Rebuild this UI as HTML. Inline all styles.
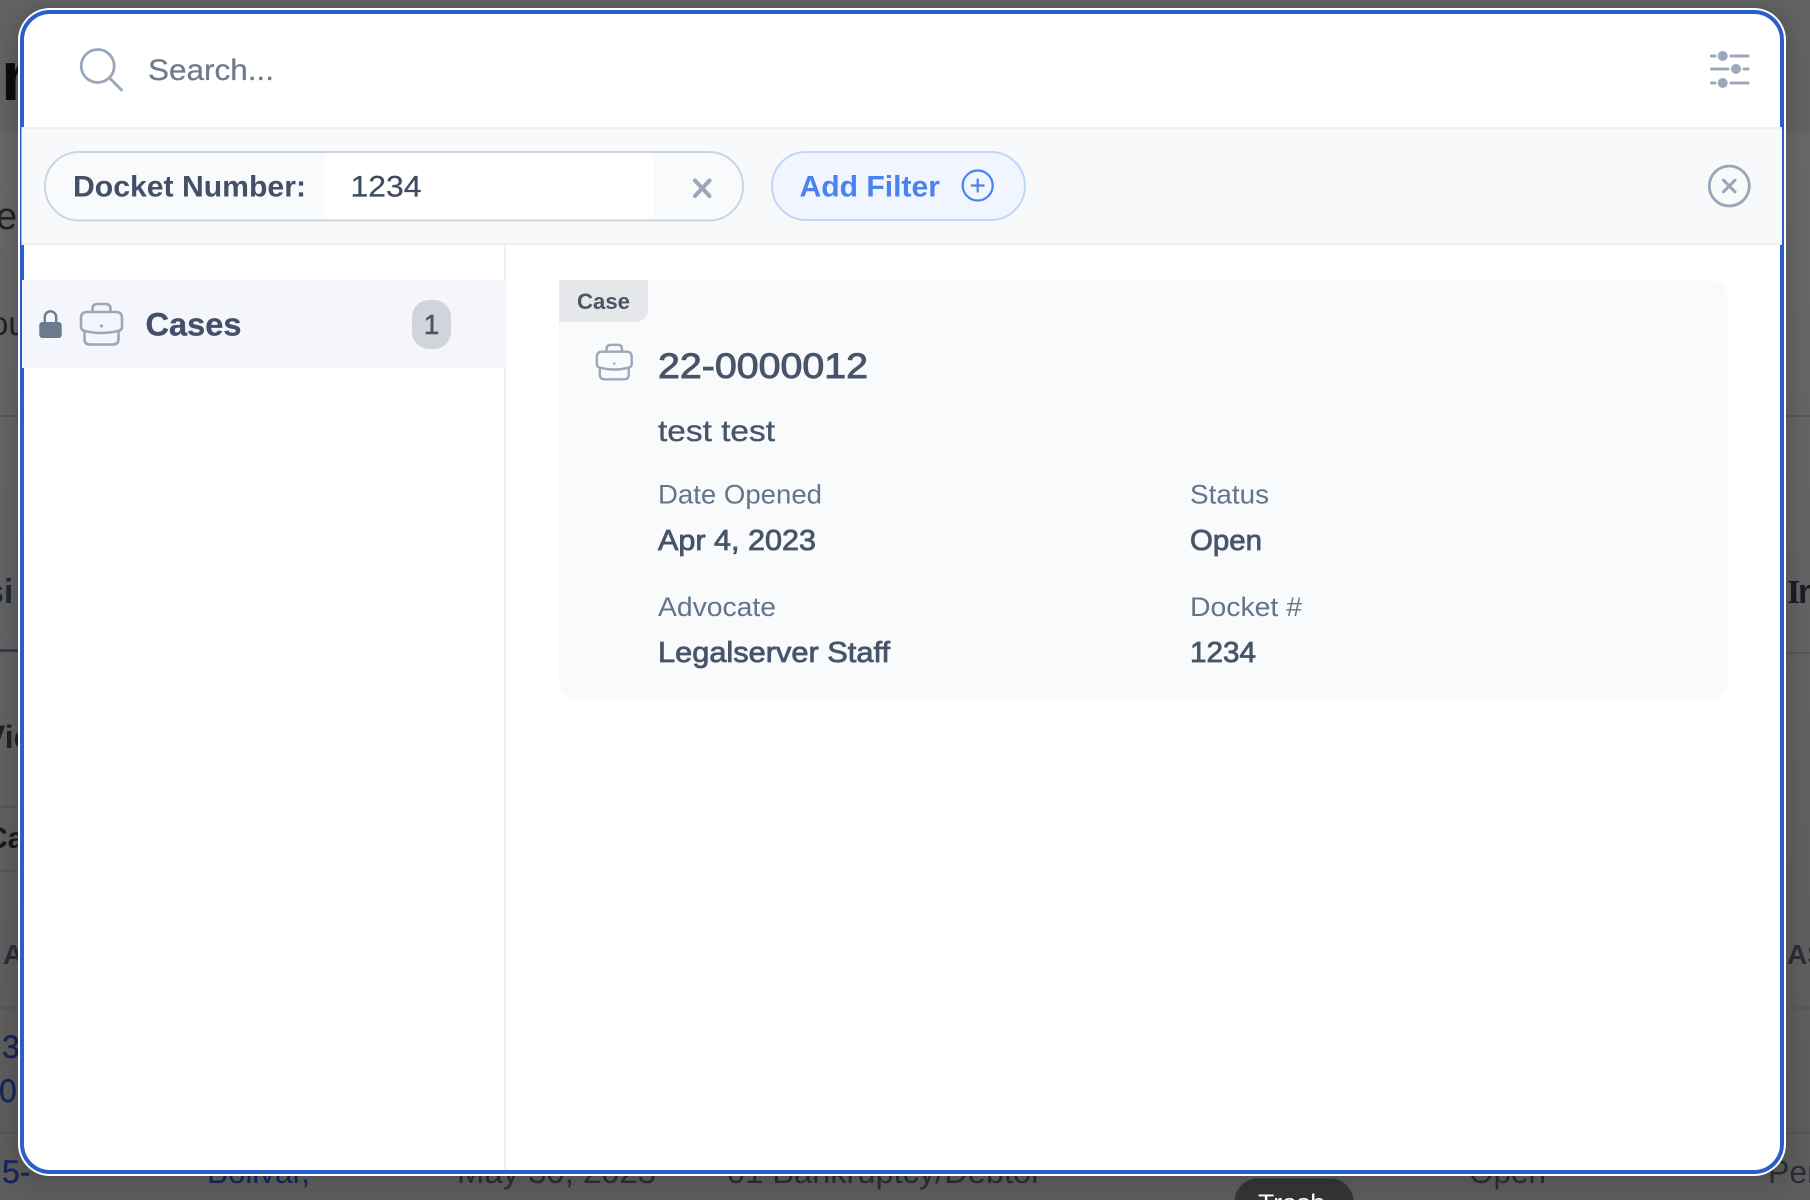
<!DOCTYPE html>
<html lang="en">
<head>
<meta charset="utf-8">
<title>Search</title>
<style>
html,body{margin:0;padding:0;width:1810px;height:1200px;overflow:hidden;background:#666}
svg{display:block}
text{font-family:"Liberation Sans",sans-serif}
</style>
</head>
<body>
<svg xmlns="http://www.w3.org/2000/svg" width="1810" height="1200" viewBox="0 0 1810 1200">
<defs>
<filter id="sh" x="-5%" y="-5%" width="110%" height="110%"><feGaussianBlur stdDeviation="12"/></filter>
<linearGradient id="bgb" x1="0" y1="0" x2="0" y2="1"><stop offset="0" stop-color="#6a6a6a"/><stop offset="1" stop-color="#5c5c5c"/></linearGradient>
</defs>
<!-- backdrop -->
<rect x="0" y="0" width="1810" height="1200" fill="url(#bgb)"/>
<rect x="0" y="0" width="1810" height="133" fill="#626364"/>
<!-- backdrop lines -->
<g fill="#565759">
<rect x="0" y="415" width="18" height="2"/><rect x="1786" y="415" width="24" height="2"/>
<rect x="0" y="806" width="18" height="2"/><rect x="0" y="870" width="18" height="2"/>
<rect x="0" y="1007" width="18" height="2"/><rect x="1786" y="1007" width="24" height="2"/>
<rect x="0" y="1132" width="18" height="2"/><rect x="1786" y="1132" width="24" height="2"/>
<rect x="1786" y="652" width="24" height="2"/>
</g>
<rect x="0" y="649" width="18" height="3" fill="#333d57"/>
<!-- backdrop text -->
<text x="1" y="100" font-size="70" font-weight="700" fill="#0c0c0f">r</text>
<text x="-4" y="229" font-size="38" fill="#202226">e</text>
<text x="-10" y="335" font-size="33" fill="#202226">ou</text>
<text x="-15" y="603" font-size="34" font-weight="700" fill="#22283a">si</text>
<text x="-16" y="748" font-size="32" font-weight="700" fill="#1f2126">Vie</text>
<text x="-14" y="848" font-size="30" font-weight="700" fill="#18191d">Ca</text>
<text x="3" y="964" font-size="28" font-weight="700" fill="#2b2e36">A</text>
<text x="2" y="1058" font-size="32" fill="#18245c" stroke="#18245c" stroke-width=".4">3</text>
<text x="-1" y="1102" font-size="32" fill="#18245c" stroke="#18245c" stroke-width=".4">0</text>
<text x="2" y="1183" font-size="32" fill="#18245c" stroke="#18245c" stroke-width=".4">5-</text>
<text x="207" y="1183" font-size="32" fill="#18245c" textLength="103" lengthAdjust="spacingAndGlyphs">Bolivar,</text>
<text x="457" y="1183" font-size="32" fill="#2a2d34" textLength="199" lengthAdjust="spacingAndGlyphs">May 30, 2023</text>
<text x="727" y="1183" font-size="32" fill="#2a2d34" textLength="315" lengthAdjust="spacingAndGlyphs">01 Bankruptcy/Debtor</text>
<text x="1469" y="1183" font-size="32" fill="#2a2d34" textLength="77" lengthAdjust="spacingAndGlyphs">Open</text>
<text x="1768" y="1183" font-size="32" fill="#2a2d34">Per</text>
<text x="1787" y="603" font-size="34" font-weight="700" fill="#1b1e26" style="font-family:'Liberation Serif',serif">I</text>
<text x="1798" y="603" font-size="34" font-weight="700" fill="#1b1e26">n</text>
<text x="1787" y="964" font-size="28" font-weight="700" fill="#2b2e36">AS</text>
<rect x="1234" y="1178" width="120" height="60" rx="24" fill="#343434" stroke="#4c5a70" stroke-width="1"/>
<text x="1258" y="1211" font-size="24" fill="#fff" textLength="67" lengthAdjust="spacingAndGlyphs">Trash</text>

<!-- modal shadow -->
<rect x="14" y="8" width="1776" height="1172" rx="32" fill="#000" opacity=".16" filter="url(#sh)"/>
<!-- modal -->
<rect x="18" y="8" width="1768" height="1168" rx="32" fill="#fff"/>
<rect x="22" y="12" width="1760" height="1160" rx="28" fill="#fff" stroke="#2a5fc9" stroke-width="4"/>

<!-- search header -->
<g fill="none" stroke="#9aa7ba" stroke-width="2.8" stroke-linecap="round">
<circle cx="97.7" cy="66" r="16.5"/>
<path d="M110 78.5 121.5 90"/>
</g>
<text x="148" y="80" font-size="30" fill="#6f7a8b" stroke="#6f7a8b" stroke-width=".25" textLength="126" lengthAdjust="spacingAndGlyphs">Search...</text>
<g stroke="#9ca8ba" stroke-width="3" stroke-linecap="round" fill="none">
<path d="M1711.5 56H1715M1731 56H1748M1711.5 69H1728M1744 69H1748M1711.5 83H1715M1731 83H1748"/>
</g>
<g fill="#9ca8ba"><circle cx="1722.7" cy="56" r="5"/><circle cx="1736" cy="69" r="5"/><circle cx="1722.7" cy="83" r="5"/></g>

<!-- filter bar -->
<rect x="21.5" y="127" width="1760.5" height="118" fill="#f8f9fb"/>
<rect x="21.5" y="127" width="1760.5" height="2" fill="#eeeff2"/>
<rect x="21.5" y="243" width="1760.5" height="2" fill="#eeeff2"/>
<rect x="45" y="152" width="698" height="68.5" rx="34" fill="#f8fafc" stroke="#ccd4e0" stroke-width="2"/>
<rect x="324" y="153" width="330" height="66" rx="7" fill="#fff"/>
<text x="73" y="196.5" font-size="30" font-weight="700" fill="#445067" textLength="233" lengthAdjust="spacingAndGlyphs">Docket Number:</text>
<text x="350.5" y="196.5" font-size="30" fill="#3f4b5f" stroke="#3f4b5f" stroke-width=".25" textLength="71" lengthAdjust="spacingAndGlyphs">1234</text>
<path d="M695 180.5 709.5 196M709.5 180.5 695 196" stroke="#9aa6b8" stroke-width="4" stroke-linecap="round" fill="none"/>
<rect x="772" y="152" width="253" height="68" rx="34" fill="#f0f5ff" stroke="#c0d7fb" stroke-width="2"/>
<text x="799.5" y="196.5" font-size="30" font-weight="700" fill="#4a82ee" textLength="140.5" lengthAdjust="spacingAndGlyphs">Add Filter</text>
<circle cx="977.7" cy="185.5" r="15" fill="none" stroke="#4a82ee" stroke-width="2.2"/>
<path d="M977.7 179.5V191.5M971.7 185.5H983.7" stroke="#4a82ee" stroke-width="2.2" stroke-linecap="round"/>
<circle cx="1729.3" cy="186" r="20" fill="none" stroke="#9aa6b8" stroke-width="2.8"/>
<path d="M1723.5 180.2 1735 191.8M1735 180.2 1723.5 191.8" stroke="#9aa6b8" stroke-width="3" stroke-linecap="round"/>

<!-- sidebar -->
<rect x="504" y="245" width="2" height="925" fill="#f0f1f3"/>
<rect x="22" y="280" width="483" height="88" fill="#f4f6fb"/>
<path d="M44.8 323V317A5.7 5.7 0 0 1 56.2 317V323" fill="none" stroke="#6c7a8d" stroke-width="2.4"/>
<rect x="39.3" y="322" width="22.4" height="16" rx="3" fill="#6c7a8d"/>
<g fill="none" stroke="#9ca8ba" stroke-width="2.6" stroke-linejoin="round" stroke-linecap="round">
<path d="M92.5 312V309Q92.5 304 97.5 304H105.5Q110.5 304 110.5 309V312"/>
<path d="M87 312H116Q122 312 122 318V327Q122 330 118 331Q101 335 85 331Q81 330 81 327V318Q81 312 87 312Z"/>
<path d="M84.5 331V339Q84.5 344.5 90 344.5H113Q118.5 344.5 118.5 339V331"/>
</g>
<circle cx="101.5" cy="326" r="1.6" fill="#9ca8ba"/>
<text x="145.5" y="335.5" font-size="32" font-weight="700" fill="#445067" stroke="#445067" stroke-width=".3" textLength="96" lengthAdjust="spacingAndGlyphs">Cases</text>
<rect x="412" y="300" width="39" height="49" rx="17" fill="#d1d5db"/>
<text x="431.5" y="334" font-size="28" fill="#4b5563" stroke="#4b5563" stroke-width=".5" text-anchor="middle">1</text>

<!-- result card -->
<rect x="559" y="280" width="1169" height="420" rx="18" fill="#f8fafc"/>
<path d="M559 280H648V308Q648 322 634 322H559Z" fill="#e5e7eb"/>
<text x="577" y="309" font-size="22" font-weight="700" fill="#4b5563" textLength="53" lengthAdjust="spacingAndGlyphs">Case</text>
<g transform="translate(528 86.45) scale(.85)" fill="none" stroke="#9ca8ba" stroke-width="2.8" stroke-linejoin="round" stroke-linecap="round">
<path d="M92.5 312V309Q92.5 304 97.5 304H105.5Q110.5 304 110.5 309V312"/>
<path d="M87 312H116Q122 312 122 318V327Q122 330 118 331Q101 335 85 331Q81 330 81 327V318Q81 312 87 312Z"/>
<path d="M84.5 331V339Q84.5 344.5 90 344.5H113Q118.5 344.5 118.5 339V331"/>
<circle cx="101.5" cy="326" r="1" fill="#9ca8ba" stroke-width="1"/>
</g>
<text x="658" y="378" font-size="35" fill="#475569" stroke="#475569" stroke-width=".9" textLength="210" lengthAdjust="spacingAndGlyphs">22-0000012</text>
<text x="658" y="441" font-size="30" fill="#475569" stroke="#475569" stroke-width=".35" textLength="117" lengthAdjust="spacingAndGlyphs">test test</text>
<text x="658" y="503.5" font-size="27" fill="#64748b" textLength="164" lengthAdjust="spacingAndGlyphs">Date Opened</text>
<text x="658" y="550" font-size="29" fill="#475569" stroke="#475569" stroke-width=".8" textLength="158" lengthAdjust="spacingAndGlyphs">Apr 4, 2023</text>
<text x="658" y="616" font-size="27" fill="#64748b" textLength="118" lengthAdjust="spacingAndGlyphs">Advocate</text>
<text x="658" y="662" font-size="29" fill="#475569" stroke="#475569" stroke-width=".8" textLength="232" lengthAdjust="spacingAndGlyphs">Legalserver Staff</text>
<text x="1190" y="503.5" font-size="27" fill="#64748b" textLength="79" lengthAdjust="spacingAndGlyphs">Status</text>
<text x="1190" y="550" font-size="29" fill="#475569" stroke="#475569" stroke-width=".8" textLength="72" lengthAdjust="spacingAndGlyphs">Open</text>
<text x="1190" y="616" font-size="27" fill="#64748b" textLength="112" lengthAdjust="spacingAndGlyphs">Docket #</text>
<text x="1190" y="662" font-size="29" fill="#475569" stroke="#475569" stroke-width=".8" textLength="66" lengthAdjust="spacingAndGlyphs">1234</text>
</svg>
</body>
</html>
